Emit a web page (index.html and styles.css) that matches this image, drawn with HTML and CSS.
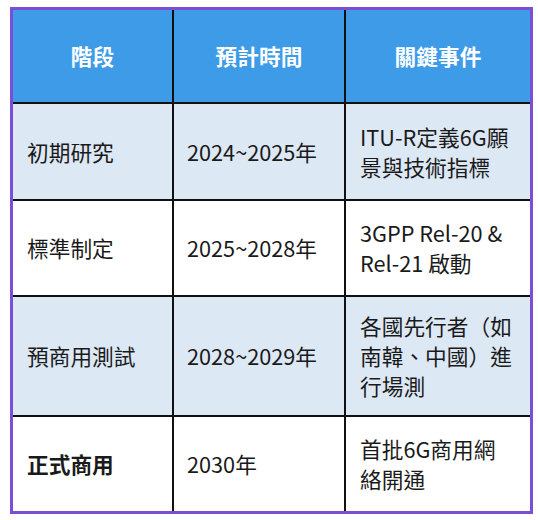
FILE: index.html
```html
<!DOCTYPE html>
<html lang="zh-Hant">
<head>
<meta charset="utf-8">
<link rel="stylesheet" href="styles.css">
</head>
<body>
<div class="wrap">
<table class="timeline">
  <colgroup>
    <col class="c1"><col class="c2"><col class="c3">
  </colgroup>
  <thead>
    <tr class="head"><th>階段</th><th>預計時間</th><th>關鍵事件</th></tr>
  </thead>
  <tbody>
    <tr class="r1 alt"><td>初期研究</td><td>2024~2025年</td><td>ITU-R定義6G願<br>景與技術指標</td></tr>
    <tr class="r2"><td>標準制定</td><td>2025~2028年</td><td>3GPP Rel-20 &amp;<br>Rel-21 啟動</td></tr>
    <tr class="r3 alt"><td>預商用測試</td><td>2028~2029年</td><td>各國先行者（如<br>南韓、中國）進<br>行場測</td></tr>
    <tr class="r4 last"><td class="strong">正式商用</td><td>2030年</td><td>首批6G商用網<br>絡開通</td></tr>
  </tbody>
</table>
</div>
</body>
</html>
```
FILE: styles.css
```css
html, body {
  margin: 0;
  padding: 0;
  background: #ffffff;
}
.wrap {
  padding: 7px 5px 0 10px;
}
.timeline {
  width: 523px;
  table-layout: fixed;
  border-collapse: separate;
  border-spacing: 0;
  border: 3px solid #7a4fd6;
  font-family: "Noto Sans CJK TC", "Noto Sans", sans-serif;
  font-size: 21.7px;
  line-height: 30px;
  color: #1a1a1a;
}
.c1 { width: 161px; }
.c2 { width: 172px; }
.c3 { width: 184px; }
.timeline th,
.timeline td {
  border-right: 2px solid #111;
  border-bottom: 2px solid #111;
  padding: 0 0 0 14px;
  vertical-align: middle;
  text-align: left;
  font-weight: normal;
}
.timeline th:last-child,
.timeline td:last-child {
  border-right: none;
}
.timeline tr.last td {
  border-bottom: none;
}
.timeline td:nth-child(2) { padding-left: 13px; }
.head th {
  background: #3e9be8;
  color: #ffffff;
  font-weight: bold;
  text-align: center;
  padding: 0;
  height: 92px;
}
.alt td { background: #dde8f5; }
.r1 td { height: 95px; }
.r2 td { height: 94px; }
.r3 td { height: 118px; }
.r4 td { height: 94px; }
.timeline td.strong { font-weight: bold; }
```
